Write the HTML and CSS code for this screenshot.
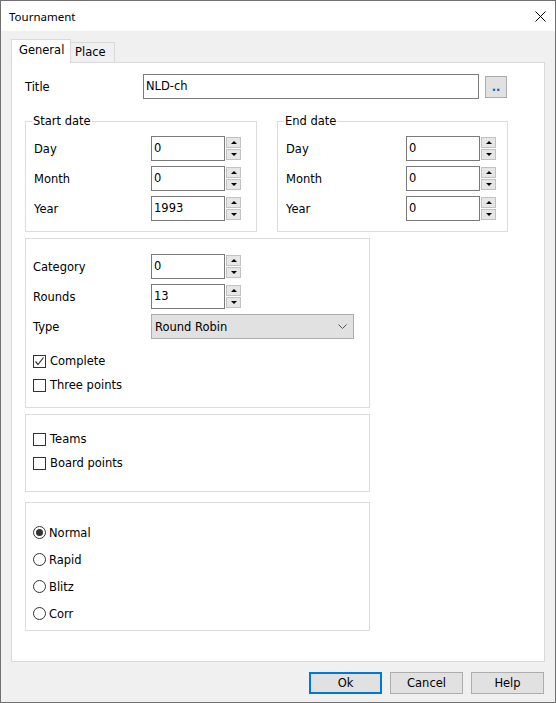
FILE: index.html
```html
<!DOCTYPE html>
<html lang="en">

<head>
    <meta charset="UTF-8">
    <title>Tournament</title>
    <link rel="stylesheet" href="styles.css">
</head>

<body>
    <div class="window">
        <div class="titlebar">
            <span class="caption">Tournament</span>
            <svg class="close" width="11" height="11" viewBox="0 0 11 11">
                <path d="M0.5 0.5 L10.5 10.5 M10.5 0.5 L0.5 10.5" stroke="#000" stroke-width="1" fill="none" />
            </svg>
        </div>

        <div class="client">
            <div class="tabs">
                <div class="tab active">General</div>
                <div class="tab place">Place</div>
            </div>

            <div class="panel">
                <div class="title-row">
                    <span class="label title-label">Title</span>
                    <div class="edit title-edit">NLD-ch</div>
                    <div class="btn dots">..</div>
                </div>

                <div class="dates">
                    <fieldset class="group start">
                        <legend>Start date</legend>
                        <div class="field first">
                            <span class="label">Day</span>
                            <div class="edit">0</div>
                            <div class="spin"><i class="up"></i><i class="down"></i></div>
                        </div>
                        <div class="field">
                            <span class="label">Month</span>
                            <div class="edit">0</div>
                            <div class="spin"><i class="up"></i><i class="down"></i></div>
                        </div>
                        <div class="field">
                            <span class="label">Year</span>
                            <div class="edit">1993</div>
                            <div class="spin"><i class="up"></i><i class="down"></i></div>
                        </div>
                    </fieldset>

                    <fieldset class="group end">
                        <legend>End date</legend>
                        <div class="field first">
                            <span class="label">Day</span>
                            <div class="edit">0</div>
                            <div class="spin"><i class="up"></i><i class="down"></i></div>
                        </div>
                        <div class="field">
                            <span class="label">Month</span>
                            <div class="edit">0</div>
                            <div class="spin"><i class="up"></i><i class="down"></i></div>
                        </div>
                        <div class="field">
                            <span class="label">Year</span>
                            <div class="edit">0</div>
                            <div class="spin"><i class="up"></i><i class="down"></i></div>
                        </div>
                    </fieldset>
                </div>

                <div class="box settings">
                    <div class="field">
                        <span class="label">Category</span>
                        <div class="edit">0</div>
                        <div class="spin"><i class="up"></i><i class="down"></i></div>
                    </div>
                    <div class="field">
                        <span class="label">Rounds</span>
                        <div class="edit">13</div>
                        <div class="spin"><i class="up"></i><i class="down"></i></div>
                    </div>
                    <div class="field">
                        <span class="label">Type</span>
                        <div class="combo">
                            <span>Round Robin</span>
                            <svg width="9" height="5" viewBox="0 0 9 5">
                                <path d="M0.5 0.5 L4.5 4.5 L8.5 0.5" stroke="#555" stroke-width="1" fill="none" />
                            </svg>
                        </div>
                    </div>
                    <div class="checks">
                        <div class="check">
                            <span class="tick on">
                                <svg width="11" height="11" viewBox="0 0 11 11">
                                    <path d="M1.5 5.5 L4 8.5 L9.5 1.5" stroke="#333" stroke-width="1.2" fill="none" />
                                </svg>
                            </span>
                            Complete
                        </div>
                        <div class="check"><span class="tick"></span>Three points</div>
                    </div>
                </div>

                <div class="box teams">
                    <div class="check"><span class="tick"></span>Teams</div>
                    <div class="check"><span class="tick"></span>Board points</div>
                </div>

                <div class="box speed">
                    <div class="radio"><span class="dot on"></span>Normal</div>
                    <div class="radio"><span class="dot"></span>Rapid</div>
                    <div class="radio"><span class="dot"></span>Blitz</div>
                    <div class="radio"><span class="dot"></span>Corr</div>
                </div>
            </div>

            <div class="footer">
                <div class="btn push default">Ok</div>
                <div class="btn push">Cancel</div>
                <div class="btn push">Help</div>
            </div>
        </div>
    </div>
</body>

</html>
```

FILE: styles.css
```css
* {
    box-sizing: border-box;
}

body {
    margin: 0;
    font-family: "DejaVu Sans", sans-serif;
    font-size: 11.5px;
    color: #000;
    background: #fff;
}

.window {
    width: 556px;
    height: 703px;
    border: 1px solid #707070;
    display: flex;
    flex-direction: column;
}

.titlebar {
    height: 30px;
    flex: none;
    background: #fff;
    display: flex;
    align-items: center;
    justify-content: space-between;
    padding: 1px 9px 0 8px;
}

.caption {
    font-family: "Noto Sans", sans-serif;
    font-size: 11.5px;
}

.client {
    flex: 1;
    background: #f0f0f0;
    padding: 8px 10px 0 10px;
    display: flex;
    flex-direction: column;
}

/* tabs */

.tabs {
    display: flex;
    align-items: flex-end;
    height: 23px;
}

.tab {
    height: 20px;
    width: 45px;
    margin-left: -1px;
    padding: 2px 0 0 4px;
    line-height: 14px;
    border: 1px solid #d9d9d9;
    border-bottom: none;
    background: #f0f0f0;
}

.tab.active {
    position: relative;
    z-index: 1;
    height: 24px;
    width: 60px;
    margin-left: 0;
    margin-bottom: -1px;
    padding: 3px 0 0 7px;
    background: #fff;
}

.panel {
    height: 600px;
    flex: none;
    background: #fff;
    border: 1px solid #d9d9d9;
    padding: 11px 0 0 13px;
}

/* title */

.title-row {
    display: flex;
    align-items: center;
    height: 25px;
}

.title-label {
    width: 118px;
}

.edit {
    width: 74px;
    height: 25px;
    border: 1px solid #7a7a7a;
    background: #fff;
    padding-left: 2px;
    line-height: 23px;
}

.edit.title-edit {
    width: 336px;
}

.btn {
    background: #e1e1e1;
    border: 1px solid #adadad;
    text-align: center;
}

.dots {
    width: 22px;
    height: 22px;
    margin-left: 6px;
    line-height: 20px;
    color: #1a5fa8;
    font-weight: bold;
}

/* group boxes */

.dates {
    display: flex;
    margin-top: 15px;
}

.group {
    margin: 0;
    padding: 0 8px 10px 8px;
    border: 1px solid #dcdcdc;
    width: 232px;
    min-width: 0;
}

.group.end {
    width: 231px;
    margin-left: 20px;
}

.group legend {
    padding: 0 1px;
    margin-left: -2px;
    line-height: 14px;
}

.field {
    display: flex;
    align-items: center;
    height: 25px;
    margin-top: 5px;
}

.field.first {
    margin-top: 8px;
}

.field .label {
    width: 117px;
}

.group.end .field .label {
    width: 120px;
}

.spin {
    width: 15px;
    height: 23px;
    margin-left: 1px;
    display: flex;
    flex-direction: column;
    justify-content: space-between;
}

.spin i {
    height: 11px;
    background: #e6e6e6;
    border: 1px solid #c2c2c2;
    display: flex;
    align-items: center;
    justify-content: center;
}

.spin i::after {
    content: '';
    border-left: 3px solid transparent;
    border-right: 3px solid transparent;
}

.spin .up::after {
    border-bottom: 3px solid #000;
}

.spin .down::after {
    border-top: 3px solid #000;
}

.box {
    width: 345px;
    border: 1px solid #dcdcdc;
    padding-left: 7px;
}

.settings {
    margin-top: 6px;
    padding-top: 10px;
    padding-bottom: 10px;
}

.settings .field .label {
    width: 118px;
}

.combo {
    width: 203px;
    height: 25px;
    background: #e1e1e1;
    border: 1px solid #adadad;
    padding: 0 6px 0 3px;
    display: flex;
    align-items: center;
    justify-content: space-between;
}

.checks {
    margin-top: 10px;
}

.check {
    display: flex;
    align-items: center;
    height: 24px;
}

.tick {
    width: 13px;
    height: 13px;
    border: 1px solid #333;
    background: #fff;
    margin-right: 4px;
    display: flex;
    align-items: center;
    justify-content: center;
}

.teams {
    margin-top: 6px;
    padding-top: 12px;
    padding-bottom: 16px;
}

.speed {
    margin-top: 10px;
    padding-top: 16px;
    padding-bottom: 3px;
}

.radio {
    display: flex;
    align-items: center;
    height: 27px;
}

.dot {
    width: 13px;
    height: 13px;
    border: 1px solid #333;
    border-radius: 50%;
    margin-right: 3px;
    display: flex;
    align-items: center;
    justify-content: center;
}

.dot.on::after {
    content: '';
    width: 7px;
    height: 7px;
    border-radius: 50%;
    background: #333;
}

/* footer buttons */

.footer {
    display: flex;
    justify-content: flex-end;
    gap: 8px;
    padding: 10px 1px 0 0;
}

.push {
    width: 73px;
    height: 22px;
    line-height: 20px;
}

.push.default {
    border: 2px solid #0078d7;
    line-height: 18px;
}
```
